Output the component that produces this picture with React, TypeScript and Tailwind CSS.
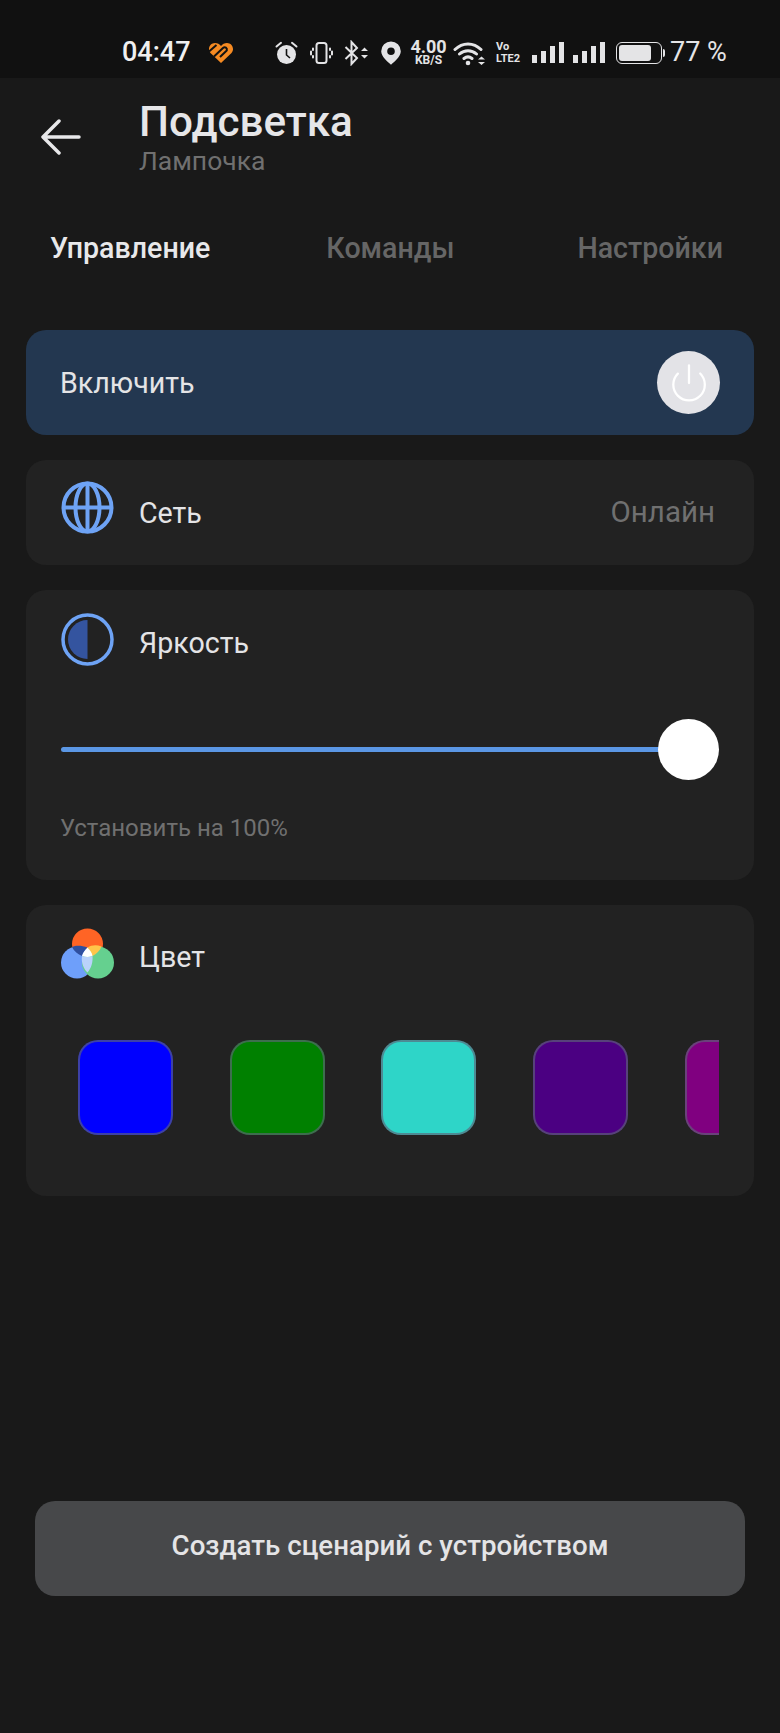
import { Power } from 'lucide-react'

const swatches = ['bg-[#0000ff]', 'bg-[#008000]', 'bg-[#2ed5c8]', 'bg-[#4b0082]', 'bg-[#800080]']

function Heart() {
  return (
    <svg width="26" height="22" viewBox="0 0 26 22" fill="none">
      <path d="M13 21 2.500 11C-1 7 2 1 7 1c2.500 0 4.500 1 6 3 1.500-2 3.500-3 6-3 5 0 8 6 4.500 10Z" fill="#f58a22" />
      <path d="M1 9.500 8.500 3M6 14.500 15 6c2-1.800 4.500 0 3.800 2.400L12 15" stroke="#111111" strokeWidth="2" />
    </svg>
  )
}

function Alarm() {
  return (
    <svg width="23" height="24" viewBox="0 0 23 24" fill="#e4e4e6">
      <circle cx="11.500" cy="13.500" r="9.500" />
      <path d="M11.500 8v6l3.500 3" fill="none" stroke="#111" strokeWidth="1.6" />
      <path d="M1.500 5.500 6 1.800M21.500 5.500 17 1.800" fill="none" stroke="#e4e4e6" strokeWidth="2" strokeLinecap="round" />
    </svg>
  )
}

function Vibrate() {
  return (
    <svg width="23" height="24" viewBox="0 0 23 24" fill="none" stroke="#e4e4e6" strokeWidth="2" strokeLinecap="round">
      <rect x="6.500" y="2" width="10" height="20" rx="2.500" />
      <path d="M3 7.500v1.500M1 10.500v3M3 15v1.500M20 7.500v1.500M22 10.500v3M20 15v1.500" />
    </svg>
  )
}

function Bluetooth() {
  return (
    <svg width="25" height="26" viewBox="0 0 25 26" fill="none" stroke="#e4e4e6" strokeWidth="2">
      <path d="M1.500 7 13 18l-5.500 6V2L13 8 1.500 19" />
      <path d="m17 11 3.500-3.500L24 11zM17 15l3.500 3.500L24 15z" fill="#e4e4e6" stroke="none" />
    </svg>
  )
}

function Pin() {
  return (
    <svg width="20" height="24" viewBox="0 0 20 24" fill="#e4e4e6">
      <path fillRule="evenodd" d="M10 0.500a9.800 9.800 0 0 1 9.800 9.800C19.800 16 13 21 10 23.800 7 21 0.200 16 0.200 10.300A9.800 9.800 0 0 1 10 0.500Zm0 6a3.800 3.800 0 1 0 0 7.600 3.800 3.800 0 0 0 0-7.600Z" />
    </svg>
  )
}

function Wifi() {
  return (
    <svg width="33" height="26" viewBox="0 0 33 26" fill="none" stroke="#e4e4e6" strokeWidth="3" strokeLinecap="round">
      <path d="M2 9.500C9.500 2 20.500 2 28 9.500M6.500 14C11.500 9.500 18.500 9.500 23.500 14M11 18.500c2.500-2 5.500-2 8 0" />
      <circle cx="15" cy="23" r="2.300" fill="#e4e4e6" stroke="none" />
      <path d="m25 19.500 3.500-3 3.500 3zM25 22l3.500 3 3.500-3z" fill="#e4e4e6" stroke="none" />
    </svg>
  )
}

function Signal() {
  return (
    <div className="flex items-end gap-[4px]">
      <div className="h-[8px] w-[5px] bg-[#e4e4e6]" />
      <div className="h-[12px] w-[5px] bg-[#e4e4e6]" />
      <div className="h-[17px] w-[5px] bg-[#e4e4e6]" />
      <div className="h-[21px] w-[5px] bg-[#e4e4e6]" />
    </div>
  )
}

function Battery() {
  return (
    <div className="flex items-center">
      <div className="flex h-[22px] w-[46px] items-center rounded-[6px] border-[1.5px] border-[#e4e4e6] p-[2px]">
        <div className="h-full w-[32px] rounded-[3px] bg-[#e4e4e6]" />
      </div>
      <div className="ml-[1px] h-[8px] w-[2px] rounded-r bg-[#e4e4e6]" />
    </div>
  )
}

function Globe() {
  return (
    <svg width="53" height="53" viewBox="0 0 53 53" fill="none" stroke="#6ea3f5" strokeWidth="4">
      <circle cx="26.500" cy="26.500" r="24" />
      <ellipse cx="26.500" cy="26.500" rx="12" ry="24" />
      <path d="M26.500 2.500v48M2.500 26.500h48" />
    </svg>
  )
}

function Contrast() {
  return (
    <svg width="53" height="53" viewBox="0 0 53 53" fill="none">
      <circle cx="26.500" cy="26.500" r="24.500" stroke="#6ea3f5" strokeWidth="3.500" />
      <path d="M26.500 7a19.500 19.500 0 0 0 0 39Z" fill="#34549f" />
    </svg>
  )
}

function ColorCircles() {
  return (
    <svg width="53" height="51" viewBox="0 0 53 51">
      <circle cx="26.500" cy="16" r="15.500" fill="#ff6425" />
      <circle cx="16" cy="34.500" r="16" fill="#6e9ffa" />
      <circle cx="37" cy="34.500" r="16" fill="#65d08f" />
      <path d="M11 19c4-2 10-1.500 15.500.5-2.500 2.500-4.500 5-5.500 8.500-4-1.500-8-5-10-9Z" fill="#2f4f9f" />
      <path d="M26.500 19.500c4-2.500 9-3 14-1-1.500 4-5 7.500-9 9.500-1-3.500-3-6-5-8.500Z" fill="#ffc54a" />
      <path d="M26.500 19.500c2.500 2.500 4.500 5 5 8.500-3 1.200-7 1.200-10.500 0 1-3.500 3-6 5.500-8.500Z" fill="#ffffff" />
      <path d="M21 28c3.500 1.200 7.500 1.200 10.500 0 .5 6-1 12-5 16.500-4-4-6.500-10-5.500-16.500Z" fill="#b9d2fb" />
    </svg>
  )
}

export default function App() {
  return (
    <div className="flex h-[1733px] w-[780px] flex-col overflow-hidden bg-[#191919] font-['Roboto',sans-serif] text-[#e4e4e6]">
      {/* status bar */}
      <div className="flex h-[78px] items-center bg-[#111111] pt-[27px] pl-[122px]">
        <span className="w-[86px] text-[27px] font-medium text-[#f0f0f0]">04:47</span>
        <Heart />
        <div className="ml-[41px]">
          <Alarm />
        </div>
        <div className="ml-[12px]">
          <Vibrate />
        </div>
        <div className="ml-[11px]">
          <Bluetooth />
        </div>
        <div className="ml-[12px]">
          <Pin />
        </div>
        <div className="ml-[9px] flex w-[37px] flex-col items-center font-bold leading-none">
          <span className="text-[18px] leading-[16px]">4.00</span>
          <span className="text-[12px] leading-[11px]">KB/S</span>
        </div>
        <div className="ml-[6px]">
          <Wifi />
        </div>
        <div className="ml-[10px] flex w-[26px] flex-col text-[11px] leading-[12px] font-bold">
          <span>Vo</span>
          <span>LTE2</span>
        </div>
        <div className="ml-[10px] flex gap-[9px]">
          <Signal />
          <Signal />
        </div>
        <div className="ml-[11px]">
          <Battery />
        </div>
        <span className="ml-[5px] text-[27px] text-[#e4e4e6]">77 %</span>
      </div>

      {/* header */}
      <div className="flex h-[122px] items-center pl-[41px]">
        <svg className="-mt-[4px]" width="40" height="36" viewBox="0 0 40 36" fill="none" stroke="#e8e8ea" strokeWidth="3.500" strokeLinecap="round" strokeLinejoin="round">
          <path d="M38 18H3M18 2 2 18l16 16" />
        </svg>
        <div className="ml-[58px] -mt-[3px] flex flex-col">
          <span className="text-[42.200px] leading-[46px] font-medium text-[#e6e6e8]">Подсветка</span>
          <span className="mt-[1px] text-[26.500px] leading-[30px] text-[#707070]">Лампочка</span>
        </div>
      </div>

      {/* tabs */}
      <div className="mt-[28px] flex h-[40px] items-center justify-between pr-[57px] pl-[50px] text-[28.6px] font-medium text-[#666666]">
        <span className="text-[#e8e8ea]">Управление</span>
        <span className="mr-[7px]">Команды</span>
        <span>Настройки</span>
      </div>

      <div className="mt-[62px] flex flex-col gap-[25px] px-[26px]">
        <div className="flex h-[105px] items-center justify-between rounded-[20px] bg-[#233750] pr-[34px] pl-[34px]">
          <span className="mt-[2px] text-[28.6px] text-[#e4e4e6]">Включить</span>
          <div className="flex h-[63px] w-[63px] items-center justify-center rounded-full bg-[#e3e3e7]">
            <Power size={42} strokeWidth={1.3} color="#ffffff" />
          </div>
        </div>

        <div className="flex h-[105px] items-center rounded-[20px] bg-[#222222] pr-[39px] pl-[35px]">
          <div className="-mt-[10px]">
            <Globe />
          </div>
          <span className="mt-[2px] ml-[25px] text-[28.6px] text-[#e4e4e6]">Сеть</span>
          <span className="ml-auto text-[29.5px] text-[#707070]">Онлайн</span>
        </div>

        <div className="flex h-[290px] flex-col rounded-[20px] bg-[#222222] px-[35px] pt-[23px]">
          <div className="flex items-center">
            <Contrast />
            <span className="mt-[8px] ml-[25px] text-[28.6px] text-[#e4e4e6]">Яркость</span>
          </div>
          <div className="mt-[53px] flex h-[61px] items-center">
            <div className="-mr-[4px] h-[5px] flex-1 rounded-l-full bg-[#5b97e5]" />
            <div className="h-[61px] w-[61px] rounded-full bg-white" />
          </div>
          <span className="mt-[30px] -ml-[1px] text-[24px] text-[#707070]">Установить на 100%</span>
        </div>

        <div className="flex h-[291px] flex-col rounded-[20px] bg-[#222222] pt-[23px] pl-[35px]">
          <div className="flex items-center">
            <ColorCircles />
            <span className="mt-[8px] ml-[25px] text-[28.6px] text-[#e4e4e6]">Цвет</span>
          </div>
          <div className="mt-[61px] flex w-[658px] gap-[56.700px] overflow-hidden pl-[17px]">
            {swatches.map((color, i) => (
              <div
                key={i}
                className={`h-[95px] w-[95px] shrink-0 rounded-[20px] border-2 border-[#5e6478]/65 ${color}`}
              />
            ))}
          </div>
        </div>
      </div>

      <div className="mt-[305px] px-[35px]">
        <div className="flex h-[95px] items-center justify-center rounded-[20px] bg-[#47484a] pb-[6px] text-[27.7px] font-medium text-[#e4e4e6]">
          Создать сценарий с устройством
        </div>
      </div>
    </div>
  )
}
